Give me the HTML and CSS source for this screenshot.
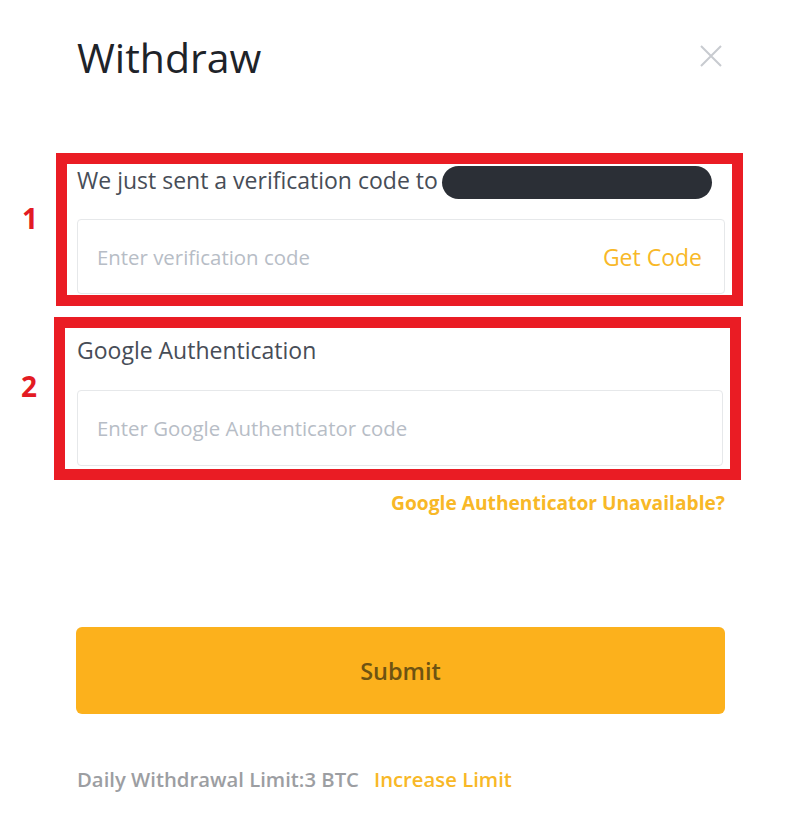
FILE: index.html
```html
<!DOCTYPE html>
<html>
<head>
<meta charset="utf-8">
<link rel="stylesheet" href="styles.css">
</head>
<body>
<div class="page">
  <div class="header">
    <h1 class="title">Withdraw</h1>
    <svg class="close" width="22" height="22" viewBox="0 0 22 22"><path d="M1 1 L21 21 M21 1 L1 21" stroke="#c8cbd0" stroke-width="2" fill="none"/></svg>
  </div>

  <div class="step step-1">
    <div class="num">1</div>
    <div class="box">
      <div class="label-row">
        <span class="label">We just sent a verification code to</span>
        <span class="redact"></span>
      </div>
      <div class="input">
        <span class="ph">Enter verification code</span>
        <span class="getcode">Get Code</span>
      </div>
    </div>
  </div>

  <div class="step step-2">
    <div class="num">2</div>
    <div class="box">
      <div class="label-row label-row-2">
        <span class="label">Google Authentication</span>
      </div>
      <div class="input input-2">
        <span class="ph">Enter Google Authenticator code</span>
      </div>
    </div>
  </div>

  <div class="unavail-row">
    <span class="unavail">Google Authenticator Unavailable?</span>
  </div>

  <div class="submit">Submit</div>

  <div class="footer">
    <span class="limit">Daily Withdrawal Limit:3 BTC</span>
    <span class="increase">Increase Limit</span>
  </div>
</div>
</body>
</html>
```

FILE: styles.css
```css
* { box-sizing: border-box; }
html, body { margin: 0; padding: 0; background: #fff; }
body { font-family: "Open Sans", "Noto Sans", sans-serif; color: #1e2329; }
.page { width: 800px; height: 832px; }

.header {
  display: flex;
  justify-content: space-between;
  align-items: flex-start;
  padding: 0 78px 0 77px;
  height: 153px;
}
.title {
  margin: 30px 0 0 0;
  font-size: 41px;
  line-height: 54px;
  font-weight: 500;
  color: #1e2329;
}
.close { margin-top: 45px; }

.step {
  display: grid;
  grid-template-columns: 56px 687px;
  align-items: start;
}
.step-2 { margin-top: 11px; grid-template-columns: 54px 687px; }
.num {
  color: #e31b23;
  font-weight: 700;
  font-size: 28px;
  line-height: 40px;
  text-align: center;
  padding-left: 4px;
  margin-top: 45px;
}
.step-2 .num { margin-top: 49px; }
.box {
  border: 11px solid #ea1c24;
  padding: 0 7px 1px 10px;
}
.step-2 .box { padding: 0 7px 3px 12px; }
.label-row {
  display: flex;
  align-items: flex-start;
  height: 55px;
}
.label {
  font-size: 23px;
  line-height: 33px;
  color: #474d57;
}
.redact {
  display: block;
  width: 270px;
  height: 33px;
  margin-left: 4px;
  margin-top: 2px;
  background: #2b2f36;
  border-radius: 17px;
}
.label-row-2 { height: 62px; padding-top: 2px; }
.label-row-2 .label { line-height: 40px; }

.input {
  height: 75px;
  border: 1px solid #e6e8ea;
  border-radius: 4px;
  display: flex;
  align-items: center;
  justify-content: space-between;
  padding: 0 22px 0 19px;
}
.input-2 { height: 76px; }
.ph { font-size: 20.4px; color: #b7bdc6; }
.getcode { font-size: 23px; color: #f8b827; font-weight: 400; }

.unavail-row {
  display: flex;
  justify-content: flex-end;
  padding-right: 75px;
  margin-top: 2px;
  height: 40px;
  align-items: center;
}
.unavail { font-size: 19.2px; font-weight: 700; color: #f8b827; }

.submit {
  margin: 105px 75px 0 76px;
  height: 87px;
  border-radius: 6px;
  background: #fcb11c;
  display: flex;
  align-items: center;
  justify-content: center;
  font-size: 23.5px;
  font-weight: 600;
  color: #6e5312;
}

.footer {
  margin: 50px 0 0 77px;
  display: flex;
  gap: 15px;
  font-size: 20.3px;
  line-height: 30px;
  font-weight: 600;
}
.limit { color: #9c9ea2; }
.increase { color: #f8b827; }
```
